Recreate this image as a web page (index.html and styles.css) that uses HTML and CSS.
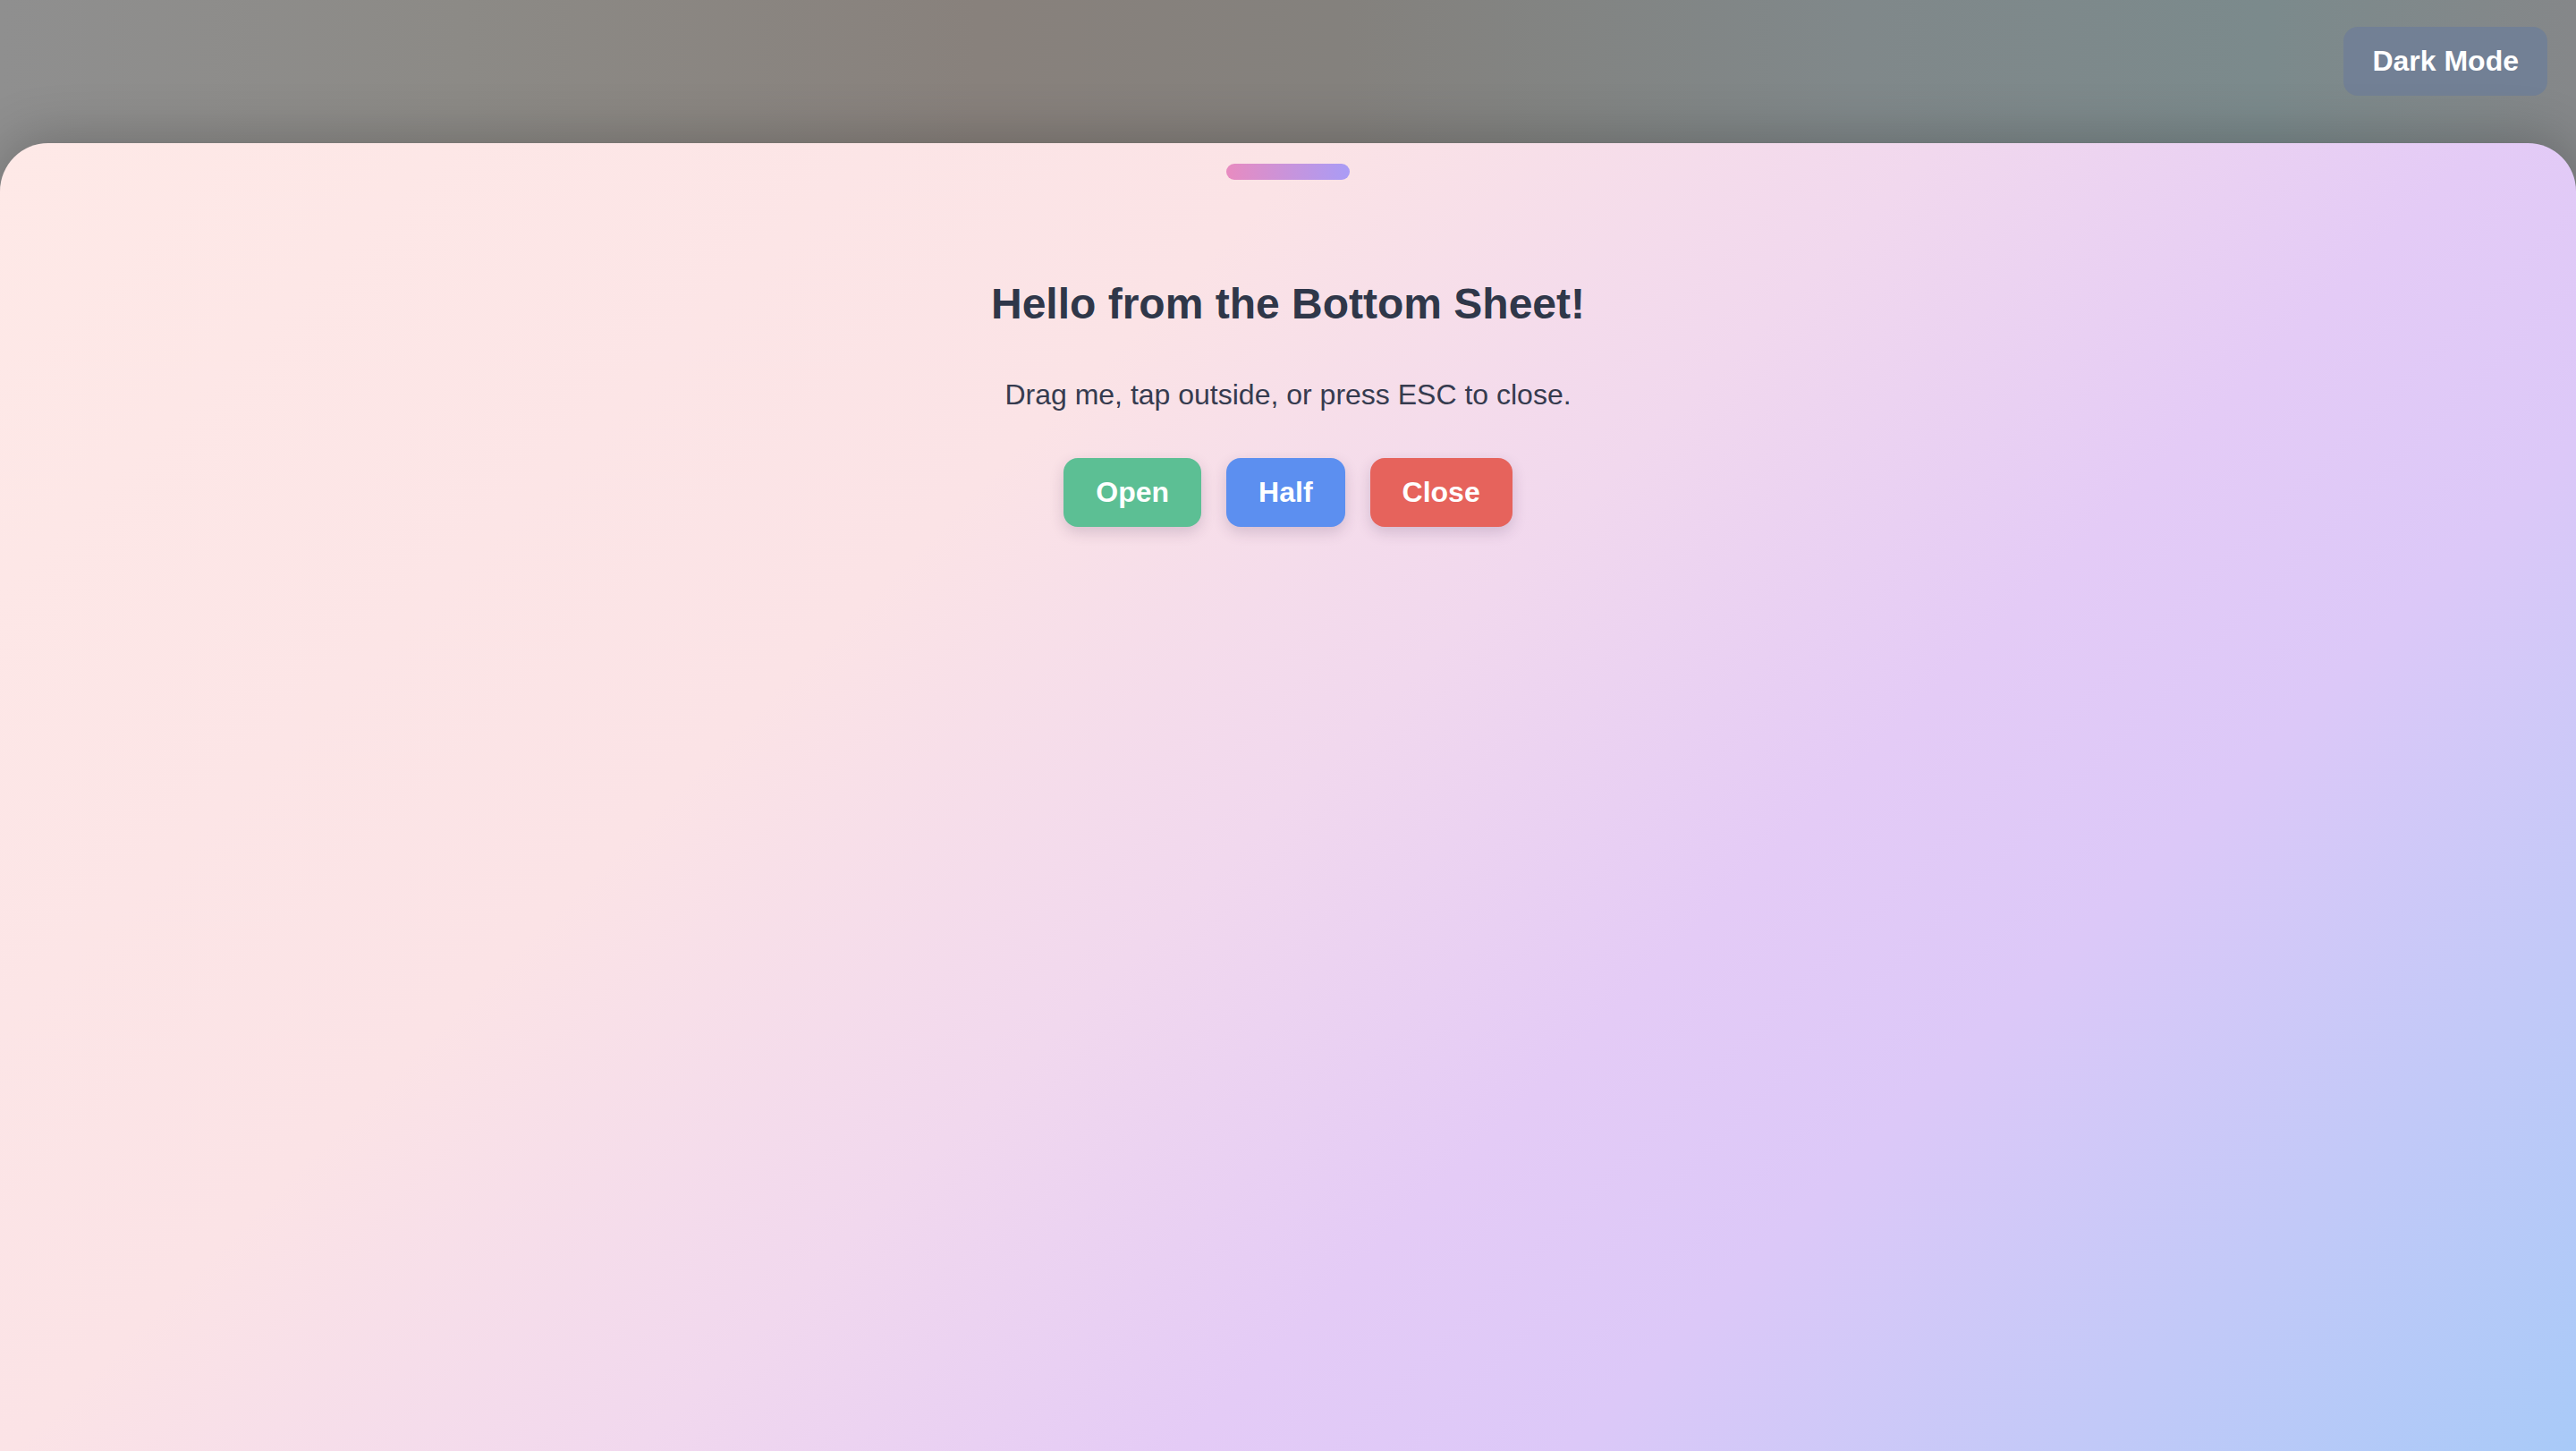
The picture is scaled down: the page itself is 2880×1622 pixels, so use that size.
FILE: index.html
```html
<!DOCTYPE html>
<html lang="en">
<head>
<meta charset="utf-8">
<title>Bottom Sheet</title>
<link rel="stylesheet" href="styles.css">
</head>
<body>
  <header class="topbar">
    <button class="theme-toggle">Dark Mode</button>
  </header>
  <section class="sheet">
    <div class="handle"></div>
    <h1 class="sheet-title">Hello from the Bottom Sheet!</h1>
    <p class="sheet-text">Drag me, tap outside, or press ESC to close.</p>
    <div class="actions">
      <button class="btn btn-open">Open</button>
      <button class="btn btn-half">Half</button>
      <button class="btn btn-close">Close</button>
    </div>
  </section>
</body>
</html>
```

FILE: styles.css
```css
* { box-sizing: border-box; }

html, body {
  height: 100%;
}

body {
  margin: 0;
  display: flex;
  flex-direction: column;
  overflow: hidden;
  font-family: "Liberation Sans", Arial, Helvetica, sans-serif;
  background:
    linear-gradient(90deg, #8f8f8f 0%, #8c8a86 18%, #88817c 38%, #84817d 52%, #80888a 72%, #7b8a8c 88%, #858789 100%);
}

.topbar {
  height: 160px;
  flex: 0 0 160px;
  padding: 30px 32px 0 0;
  display: flex;
  justify-content: flex-end;
  align-items: flex-start;
}

.theme-toggle {
  font-family: inherit;
  font-size: 32px;
  font-weight: 700;
  color: #ffffff;
  background: #728095;
  border: none;
  border-radius: 16px;
  padding: 20px 32px;
  line-height: 1.15;
  cursor: pointer;
}

.sheet {
  flex: 1;
  display: flex;
  flex-direction: column;
  align-items: center;
  padding-top: 23px;
  border-radius: 54px 54px 0 0;
  background: linear-gradient(135deg, #fee9e7 0%, #fbe3e6 34%, #f1d8ee 50%, #e4cbf6 64%, #dcc8f8 74%, #a8caf8 100%);
  box-shadow: 0 -6px 60px rgba(0, 0, 0, 0.22);
}

.handle {
  width: 138px;
  height: 18px;
  border-radius: 9px;
  background: linear-gradient(90deg, #e88bc0 0%, #a99cf6 100%);
}

.sheet-title {
  margin: 111px 0 0;
  font-size: 48px;
  font-weight: 700;
  line-height: 1.15;
  color: #2f3749;
}

.sheet-text {
  margin: 56px 0 0;
  font-size: 32px;
  line-height: 1.15;
  color: #363b4f;
}

.actions {
  margin-top: 52px;
  display: flex;
  gap: 28px;
}

.btn {
  font-family: inherit;
  font-size: 32px;
  font-weight: 700;
  line-height: 1.15;
  color: #ffffff;
  border: none;
  border-radius: 16px;
  padding: 20px 36px;
  cursor: pointer;
  box-shadow: 0 6px 16px rgba(60, 40, 80, 0.18);
}

.btn-open { background: #5cbf94; }
.btn-half { background: #5c8ff0; }
.btn-close { background: #e6635c; }
```
